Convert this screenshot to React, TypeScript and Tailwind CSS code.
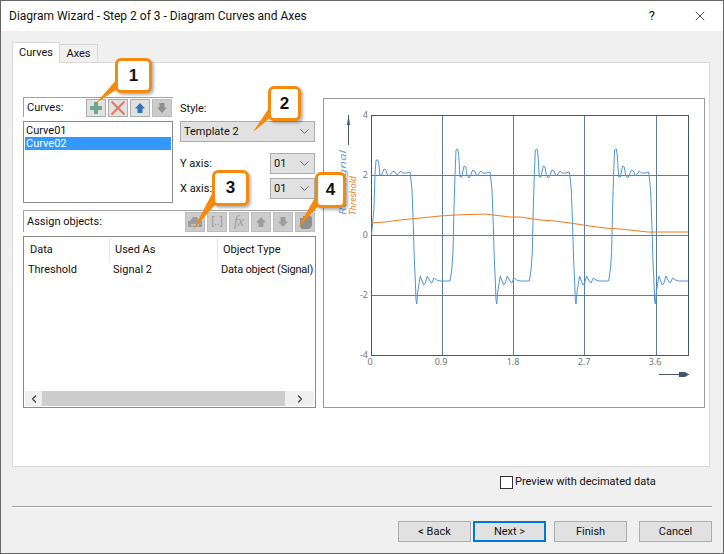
import type { ReactNode } from "react";
import { ChevronDown, ChevronLeft, ChevronRight, X } from "lucide-react";

// one period of the wave, offsets from the start of the rising edge
const PERIOD: [number, number][] = [
  [0, 281], [1, 275], [2, 267], [3, 252], [4, 208], [5, 175], [6, 150], [7.7, 149], [8.7, 155],
  [10, 177], [11.7, 177], [12.7, 172], [14, 166], [15.7, 167], [17, 175], [19, 178], [20.7, 175],
  [22.7, 170], [24.7, 171], [26.7, 176], [28.7, 174], [30.7, 171], [33, 173], [36.7, 173], [40, 172],
  [41, 180], [42, 190], [43.3, 225], [44.3, 260], [45.3, 280], [46, 300], [46.7, 304], [47.7, 292],
  [49, 284], [50.3, 276], [51.7, 280], [53.7, 285], [55.3, 283], [57.3, 276], [60, 281], [61.7, 283],
  [64, 278], [66.7, 280], [70, 281], [76, 281],
];

function buildSignal() {
  const pts: string[] = ["371.5,235"];
  [370, 450, 529.3, 608.6].forEach((t0, i) => {
    PERIOD.forEach(([dx, y]) => {
      const x = t0 + dx;
      if (i === 0 && dx < 4) return;
      if (x > 688) return;
      // first pulse overshoots less
      const yy = i === 0 && dx > 4 && dx < 30 ? 173 + (y - 173) * 0.55 : y;
      pts.push(`${x},${yy}`);
    });
  });
  pts.push("688,281");
  return pts.join(" ");
}

const THRESHOLD =
  "371,223 385,222 400,220 420,218 440,216 455,215 485,214 510,217 520,217 540,220 555,221 570,223 590,226 605,228 620,229 648,232 688,232";

function ToolButton({ children, disabled, short }: { children: ReactNode; disabled?: boolean; short?: boolean }) {
  return (
    <div
      className={`flex w-[20px] items-center justify-center border ${short ? "h-[18px]" : "h-[20px]"} ${
        disabled ? "border-[#bdbdbd] bg-[#cccccc]" : "border-[#adadad] bg-[#e1e1e1]"
      }`}
    >
      {children}
    </div>
  );
}

function Arrow({ up, color }: { up?: boolean; color: string }) {
  return (
    <svg width="14" height="14" viewBox="0 0 14 14">
      <path d={up ? "M7 2 L12 7.5 H9.5 V12 H4.5 V7.5 H2 Z" : "M7 12 L12 6.5 H9.5 V2 H4.5 V6.5 H2 Z"} fill={color} />
    </svg>
  );
}

function Combo({ label, className }: { label: string; className: string }) {
  return (
    <div className={`flex h-[21px] items-center justify-between border border-[#adadad] bg-[#e1e1e1] pl-[3px] pr-[2px] ${className}`}>
      <span className="pt-[2px] text-[#111]">{label}</span>
      <ChevronDown size={15} strokeWidth={1.1} className="text-[#333]" />
    </div>
  );
}

function Callout({ n, className }: { n: number; className: string }) {
  return (
    <div
      className={`absolute flex items-center justify-center rounded-[6px] border-[3px] border-[#f58a0d] bg-white font-['Liberation_Sans',sans-serif] text-[17px] font-bold text-[#111] shadow-[2px_2px_3px_rgba(0,0,0,0.3)] ${className}`}
    >
      {n}
    </div>
  );
}

function FooterButton({ label, primary }: { label: string; primary?: boolean }) {
  return (
    <div
      className={`flex h-[21px] w-[73px] items-center justify-center bg-[#e1e1e1] pt-px text-[#111] ${
        primary ? "border-2 border-[#0078d7]" : "border border-[#adadad]"
      }`}
    >
      {label}
    </div>
  );
}

function Chart() {
  const gridX = [442, 513, 584, 656];
  const gridY = [175, 235, 295];
  return (
    <div className="ml-[7px] mt-px h-[310px] w-[382px] border border-[#9a9a9a] bg-white">
      <svg width="380" height="308" viewBox="324 99 380 308" className="block">
        {gridX.map((x) => (
          <line key={x} x1={x + 0.5} x2={x + 0.5} y1="115" y2="355" stroke="#5f7a9f" strokeWidth="1" />
        ))}
        {gridY.map((y) => (
          <line key={y} x1="371" x2="688" y1={y + 0.5} y2={y + 0.5} stroke="#5f7a9f" strokeWidth="1" />
        ))}
        <rect x="371" y="115" width="317" height="240" fill="none" stroke="#44566f" strokeWidth="1" transform="translate(0.5 0.5)" />
        <polyline points={buildSignal()} fill="none" stroke="#4f97d6" strokeWidth="1" />
        <polyline points={THRESHOLD} fill="none" stroke="#ef7a1f" strokeWidth="1" />

        <g fontFamily="Noto Sans, sans-serif" fontSize="9" fill="#6f7680">
          <text x="368" y="118" textAnchor="end">4</text>
          <text x="368" y="178" textAnchor="end">2</text>
          <text x="368" y="238" textAnchor="end">0</text>
          <text x="368" y="298" textAnchor="end">-2</text>
          <text x="368" y="358" textAnchor="end">-4</text>
          <text x="370" y="365" textAnchor="middle">0</text>
          <text x="441" y="365" textAnchor="middle">0.9</text>
          <text x="513" y="365" textAnchor="middle">1.8</text>
          <text x="584" y="365" textAnchor="middle">2.7</text>
          <text x="655" y="365" textAnchor="middle">3.6</text>
        </g>

        <g fontFamily="Noto Sans, sans-serif" fontSize="9.5" fontStyle="italic">
          <text transform="translate(346 215) rotate(-90)" fill="#6fa3d8" textLength="65" lengthAdjust="spacingAndGlyphs">Raw Signal</text>
          <text transform="translate(356 215) rotate(-90)" fill="#f08030" textLength="39" lengthAdjust="spacingAndGlyphs">Threshold</text>
        </g>

        {/* axis arrows */}
        <path d="M348.5 145 V115" stroke="#44566f" strokeWidth="1" />
        <path d="M347 125 L348.5 115 L350 125 Z" fill="#44566f" />
        <path d="M659 374.5 H689" stroke="#44566f" strokeWidth="1" />
        <path d="M679 372 H685 L689 374.5 L685 377 H679 Z" fill="#44566f" />
      </svg>
    </div>
  );
}

export default function App() {
  return (
    <div className="relative flex h-[554px] w-[724px] flex-col overflow-hidden border border-[#666] bg-[#f0f0f0] font-['Roboto',sans-serif] text-[11px] text-[#111]">
      {/* title bar */}
      <div className="flex h-[30px] shrink-0 items-center bg-white pl-[8px] pr-[15px] text-[12px]">
        <span>Diagram Wizard - Step 2 of 3 - Diagram Curves and Axes</span>
        <span className="ml-auto text-[13px]">?</span>
        <X size={16} strokeWidth={1.1} className="ml-[37px]" />
      </div>

      {/* tabs */}
      <div className="ml-[11px] mt-[11px] flex h-[20px] items-end">
        <div className="z-10 -mb-px flex h-[21px] w-[48px] items-center justify-center border border-b-0 border-[#d9d9d9] bg-white">Curves</div>
        <div className="flex h-[18px] w-[38px] items-center justify-center border border-b-0 border-l-0 border-[#d9d9d9] bg-[#f0f0f0] pt-[2px]">Axes</div>
      </div>

      {/* tab pane */}
      <div className="ml-[11px] flex h-[405px] w-[698px] border border-[#d9d9d9] bg-white pl-[10px] pt-[34px]">
        <div className="flex w-[293px] shrink-0 flex-col">
          <div className="flex">
            <div className="flex w-[150px] flex-col">
              <div className="flex h-[20px] w-[150px] items-center border-l border-t border-[#a0a0a0] pl-[3px]">
                <span className="pt-[2px]">Curves:</span>
                <div className="ml-auto flex gap-[2px] pr-[1px]">
                  <ToolButton short>
                    <svg width="14" height="14" viewBox="0 0 14 14">
                      <path d="M5 1 H9 V5 H13 V9 H9 V13 H5 V9 H1 V5 H5 Z" fill="#6fa58c" />
                    </svg>
                  </ToolButton>
                  <ToolButton short>
                    <svg width="16" height="16" viewBox="0 0 16 16">
                      <path d="M1.5 1.5 L14.5 14.5 M14.5 1.5 L1.5 14.5" stroke="#df7a62" strokeWidth="2" />
                    </svg>
                  </ToolButton>
                  <ToolButton short>
                    <Arrow up color="#2f72b5" />
                  </ToolButton>
                  <ToolButton short disabled>
                    <Arrow color="#8f8f8f" />
                  </ToolButton>
                </div>
              </div>
              <div className="mt-[4px] h-[82px] w-[150px] border border-[#8a8a8a] bg-white p-px leading-[13px]">
                <div className="h-[14px] pl-px pt-px">Curve01</div>
                <div className="h-[13px] bg-[#3399ff] pl-px text-white">Curve02</div>
              </div>
            </div>

            <div className="ml-[7px] flex w-[135px] flex-col">
              <div className="mt-[4px] h-[20px]">Style:</div>
              <Combo label="Template 2" className="w-[135px]" />
              <div className="mt-[11px] flex items-center justify-between">
                <span className="pt-[2px]">Y axis:</span>
                <Combo label="01" className="w-[45px]" />
              </div>
              <div className="mt-[4px] flex items-center justify-between">
                <span className="pt-[2px]">X axis:</span>
                <Combo label="01" className="w-[45px]" />
              </div>
            </div>
          </div>

          {/* assign objects */}
          <div className="mt-[7px] flex h-[22px] items-center border-l border-t border-[#a0a0a0] pl-[3px]">
            <span className="pt-[2px]">Assign objects:</span>
            <div className="ml-auto flex gap-[2px] pr-[1px]">
              <ToolButton disabled>
                <svg width="16" height="14" viewBox="0 0 16 14">
                  <path d="M3 6 L6 2 H10 L13 6 H15 V12 H1 V6 Z" fill="#9c9c9c" />
                  <path d="M4 10 H12" stroke="#cccccc" strokeWidth="1.5" />
                </svg>
              </ToolButton>
              <ToolButton disabled>
                <span className="text-[11px] leading-none text-[#9c9c9c]">[..]</span>
              </ToolButton>
              <ToolButton disabled>
                <span className="font-['Liberation_Serif',serif] text-[14px] italic leading-none text-[#9c9c9c]">fx</span>
              </ToolButton>
              <ToolButton disabled>
                <Arrow up color="#9c9c9c" />
              </ToolButton>
              <ToolButton disabled>
                <Arrow color="#9c9c9c" />
              </ToolButton>
              <ToolButton disabled>
                <svg width="16" height="16" viewBox="0 0 16 16">
                  <path d="M3 4 H6 V2 H13 Q15 2 15 4 V10 Q15 15 10 15 H6 Q3 15 3 11 Z" fill="#8f8f8f" />
                </svg>
              </ToolButton>
            </div>
          </div>

          <div className="mt-[4px] flex h-[172px] w-[293px] flex-col border border-[#8a8a8a] bg-white p-px">
            <div className="grid h-[24px] grid-cols-[85px_108px_1fr] items-center">
              <div className="flex h-full items-center border-r border-[#e5e5e5] pl-[5px] pt-px">Data</div>
              <div className="flex h-full items-center border-r border-[#e5e5e5] pl-[5px] pt-px">Used As</div>
              <div className="flex h-full items-center whitespace-nowrap pl-[5px] pt-px">Object Type</div>
            </div>
            <div className="grid grid-cols-[85px_108px_1fr] overflow-hidden whitespace-nowrap">
              <div className="pl-[3px]">Threshold</div>
              <div className="pl-[3px]">Signal 2</div>
              <div className="pl-[3px] tracking-[-0.2px]">Data object (Signal)</div>
            </div>
            <div className="mt-auto flex h-[15px] items-center bg-[#f0f0f0] text-[#444]">
              <div className="flex w-[17px] justify-center">
                <ChevronLeft size={12} strokeWidth={2.5} />
              </div>
              <div className="h-full w-[243px] bg-[#cdcdcd]" />
              <div className="flex flex-1 justify-center">
                <ChevronRight size={12} strokeWidth={2.5} />
              </div>
            </div>
          </div>
        </div>

        <Chart />
      </div>

      {/* decimated preview */}
      <div className="ml-[499px] mt-[6px] flex h-[18px] items-center">
        <div className="h-[13px] w-[13px] border border-[#333] bg-white" />
        <span className="ml-[2px]">Preview with decimated data</span>
      </div>

      <div className="ml-[11px] mt-[15px] h-[2px] w-[700px] border-b border-b-white bg-[#a0a0a0]" />

      {/* footer buttons */}
      <div className="ml-[397px] mt-[13px] flex">
        <FooterButton label="< Back" />
        <div className="ml-[2px]">
          <FooterButton label="Next >" primary />
        </div>
        <div className="ml-[8px]">
          <FooterButton label="Finish" />
        </div>
        <div className="ml-[12px]">
          <FooterButton label="Cancel" />
        </div>
      </div>

      {/* numbered callouts sit over the dialog */}
      <svg className="pointer-events-none absolute left-[-1px] top-[-1px]" width="724" height="554">
        <polygon points="96,103 118,78 122,86" fill="#f58a0d" />
        <polygon points="253,132 271,105 277,112" fill="#f58a0d" />
        <polygon points="193,230 214,190 221,198" fill="#f58a0d" />
        <polygon points="298,228 318,192 324,200" fill="#f58a0d" />
      </svg>
      <Callout n={1} className="left-[114px] top-[57px] h-[35px] w-[37px]" />
      <Callout n={2} className="left-[267px] top-[85px] h-[35px] w-[33px]" />
      <Callout n={3} className="left-[211px] top-[169px] h-[36px] w-[37px]" />
      <Callout n={4} className="left-[314px] top-[171px] h-[36px] w-[31px]" />
    </div>
  );
}
